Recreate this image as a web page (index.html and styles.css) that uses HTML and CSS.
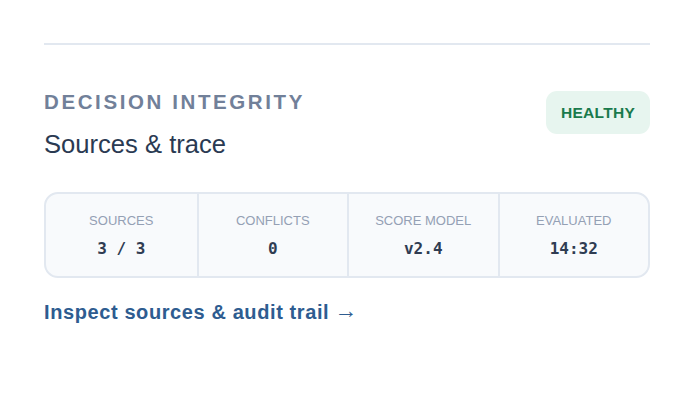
FILE: index.html
```html
<!DOCTYPE html>
<html lang="en">
<head>
<meta charset="utf-8">
<title>Decision integrity</title>
<link rel="stylesheet" href="styles.css">
</head>
<body>
  <section class="panel">
    <header class="panel-head">
      <div class="titles">
        <div class="eyebrow">DECISION INTEGRITY</div>
        <h2 class="title">Sources &amp; trace</h2>
      </div>
      <span class="status">HEALTHY</span>
    </header>

    <div class="stats">
      <div class="stat">
        <div class="stat-label">SOURCES</div>
        <div class="stat-value">3 / 3</div>
      </div>
      <div class="stat">
        <div class="stat-label">CONFLICTS</div>
        <div class="stat-value">0</div>
      </div>
      <div class="stat">
        <div class="stat-label">SCORE MODEL</div>
        <div class="stat-value">v2.4</div>
      </div>
      <div class="stat">
        <div class="stat-label">EVALUATED</div>
        <div class="stat-value">14:32</div>
      </div>
    </div>

    <a class="trail-link" href="#">Inspect sources &amp; audit trail<span class="arrow">→</span></a>
  </section>
</body>
</html>
```

FILE: styles.css
```css
html, body {
  margin: 0;
  padding: 0;
  background: #ffffff;
}

body {
  font-family: "Liberation Sans", Arial, sans-serif;
  padding: 43px 44px 0;
}

.panel {
  border-top: 2px solid #e2e8f0;
  padding-top: 45px;
}

.panel-head {
  display: flex;
  justify-content: space-between;
  align-items: flex-start;
}

.eyebrow {
  font-size: 20.5px;
  font-weight: 700;
  letter-spacing: 2.6px;
  color: #718099;
  line-height: 24px;
}

.title {
  margin: 15px 0 0;
  font-size: 25.6px;
  font-weight: 400;
  color: #2a3a52;
  line-height: 30px;
}

.status {
  display: inline-flex;
  align-items: center;
  justify-content: center;
  margin-top: 1px;
  width: 104px;
  height: 43px;
  border-radius: 11px;
  background: #e7f5ef;
  color: #1a7a4c;
  font-size: 15.5px;
  font-weight: 700;
  letter-spacing: 0.3px;
}

.stats {
  box-sizing: border-box;
  margin-top: 33px;
  display: grid;
  grid-template-columns: repeat(4, 1fr);
  border: 2px solid #e2e8f0;
  border-radius: 14px;
  background: #f8fafc;
  height: 86px;
}

.stat {
  display: flex;
  flex-direction: column;
  align-items: center;
  padding-top: 19px;
  gap: 10px;
}

.stat + .stat {
  border-left: 2px solid #e2e8f0;
}

.stat-label {
  font-size: 13px;
  color: #94a0b4;
  line-height: 16px;
}

.stat-value {
  font-family: "DejaVu Sans Mono", "Liberation Mono", monospace;
  font-size: 16px;
  font-weight: 700;
  color: #2f3c52;
  line-height: 20px;
}

.trail-link {
  display: inline-block;
  margin-top: 22px;
  font-size: 20px;
  font-weight: 700;
  letter-spacing: 0.6px;
  color: #2e5c90;
  text-decoration: none;
  line-height: 24px;
}

.trail-link .arrow {
  display: inline-block;
  margin-left: 5px;
  font-size: 23px;
  font-weight: 400;
  letter-spacing: 0;
  line-height: 16px;
  vertical-align: 1px;
}
```
